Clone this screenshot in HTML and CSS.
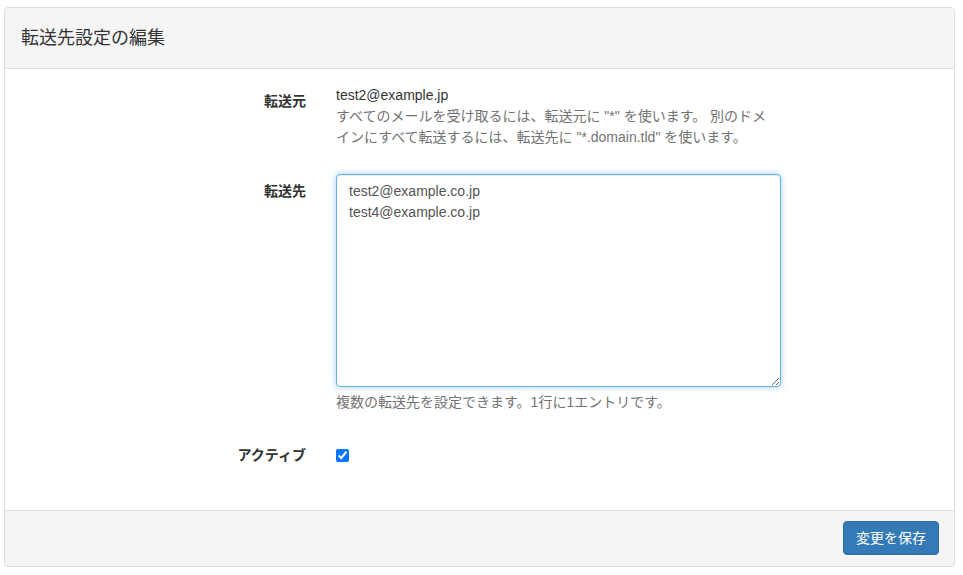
FILE: index.html
```html
<!DOCTYPE html>
<html lang="ja">
<head>
<meta charset="utf-8">
<title>転送先設定の編集</title>
<link rel="stylesheet" href="styles.css">
</head>
<body>
<div class="panel">
  <div class="panel-heading">
    <h3 class="panel-title">転送先設定の編集</h3>
  </div>
  <div class="panel-body">
    <div class="form-row row-source">
      <label class="form-label label-static">転送元</label>
      <div class="form-control-col">
        <p class="static-value">test2@example.jp</p>
        <p class="help help-source">すべてのメールを受け取るには、転送元に "*" を使います。 別のドメインにすべて転送するには、転送先に "*.domain.tld" を使います。</p>
      </div>
    </div>
    <div class="form-row row-target">
      <label class="form-label label-area" for="goto">転送先</label>
      <div class="form-control-col">
        <textarea id="goto" class="textarea is-focused">test2@example.co.jp
test4@example.co.jp</textarea>
        <p class="help help-target">複数の転送先を設定できます。1行に1エントリです。</p>
      </div>
    </div>
    <div class="form-row row-active">
      <label class="form-label label-check" for="active">アクティブ</label>
      <div class="form-control-col check-col">
        <input type="checkbox" id="active" class="checkbox" checked>
      </div>
    </div>
  </div>
  <div class="panel-footer">
    <button type="button" class="btn-primary">変更を保存</button>
  </div>
</div>
</body>
</html>
```

FILE: styles.css
```css
* { box-sizing: border-box; }

html, body {
  margin: 0;
  background: #fff;
}

body {
  padding: 7px 8px 0 4px;
  font-family: "Liberation Sans", "Noto Sans CJK JP", sans-serif;
  font-size: 14px;
  color: #333;
  line-height: 20px;
}

.panel {
  border: 1px solid #ddd;
  border-radius: 4px;
  background: #fff;
  box-shadow: 0 1px 1px rgba(0,0,0,0.05);
  height: 560px;
  display: flex;
  flex-direction: column;
  overflow: hidden;
}

.panel-heading {
  background: #f5f5f5;
  border-bottom: 1px solid #ddd;
  padding: 15px 16px 14px;
  height: 61px;
}

.panel-title {
  margin: 0;
  font-size: 18px;
  font-weight: normal;
  line-height: 30px;
  color: #333;
}

.panel-body {
  flex: 1;
  padding: 16px 0 0 0;
}

.form-row {
  display: grid;
  grid-template-columns: 301px 445px;
  column-gap: 30px;
}

.form-label {
  text-align: right;
  font-weight: bold;
  line-height: 20px;
}

.label-static { padding-top: 6px; }
.label-area { padding-top: 7px; }

.static-value {
  margin: 0;
  line-height: 20px;
}

.help {
  margin: 0;
  color: #737373;
}

.help-source {
  margin-top: 1px;
  line-height: 21px;
  max-width: 436px;
}

.row-target { margin-top: 26px; }

.textarea {
  display: block;
  width: 445px;
  height: 213px;
  margin: 0;
  padding: 6px 12px 5px;
  font-family: "Liberation Sans", "Noto Sans CJK JP", sans-serif;
  font-size: 14px;
  line-height: 21px;
  color: #555;
  border: 1px solid #ccc;
  border-radius: 4px;
  resize: vertical;
  outline: none;
}

.textarea.is-focused {
  border-color: #66afe9;
  box-shadow: inset 0 1px 1px rgba(0,0,0,0.075), 0 0 6px rgba(102,175,233,0.6);
}

.help-target {
  margin-top: 5px;
  line-height: 20px;
}

.row-active {
  margin-top: 33px;
  align-items: center;
}

.check-col {
  display: flex;
  align-items: center;
  height: 20px;
}

.checkbox {
  margin: 0;
  width: 13px;
  height: 13px;
}

.panel-footer {
  background: #f5f5f5;
  border-top: 1px solid #ddd;
  padding: 10px 15px 10px;
  display: flex;
  justify-content: flex-end;
  height: 56px;
}

.btn-primary {
  font-family: "Liberation Sans", "Noto Sans CJK JP", sans-serif;
  font-size: 14px;
  line-height: 20px;
  color: #fff;
  background: #337ab7;
  border: 1px solid #2e6da4;
  border-radius: 4px;
  padding: 6px 12px;
  height: 34px;
  cursor: pointer;
}
```
